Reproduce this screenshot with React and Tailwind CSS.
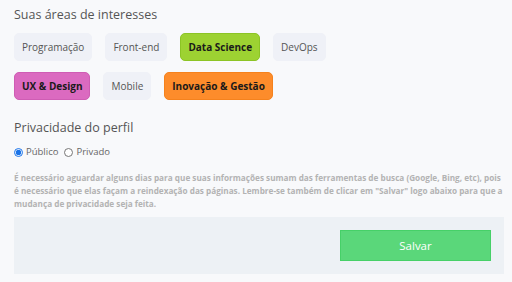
export default function App() {
  const row1 = [
    { label: "Programação", cls: "bg-[#eff1f7] text-[#555] border-[#eff1f7]" },
    { label: "Front-end", cls: "bg-[#eff1f7] text-[#555] border-[#eff1f7]" },
    { label: "Data Science", cls: "bg-[#9dd232] text-[#1a1a1a] font-bold border-[#8cc425]" },
    { label: "DevOps", cls: "bg-[#eff1f7] text-[#555] border-[#eff1f7]" },
  ];
  const row2 = [
    { label: "UX & Design", cls: "bg-[#db6ac0] text-[#1a1a1a] font-bold border-[#cf5db4]" },
    { label: "Mobile", cls: "bg-[#eff1f7] text-[#555] border-[#eff1f7]" },
    { label: "Inovação & Gestão", cls: "bg-[#fd8c2b] text-[#1a1a1a] font-bold border-[#f5821d]" },
  ];

  return (
    <div
      className="w-[512px] h-[282px] bg-[#f8f9fb] pl-[14px] pr-[8px] pt-[5px] overflow-hidden"
      style={{ fontFamily: '"Open Sans", "Noto Sans", sans-serif' }}
    >
      {/* Interesses */}
      <h2 className="text-[12.5px] text-[#555] leading-[20px]">Suas áreas de interesses</h2>
      <div className="mt-[8px] flex flex-col gap-[11px]">
        <div className="flex gap-[13px]">
          {row1.map((c) => (
            <span
              key={c.label}
              className={`h-[28px] px-[7px] flex items-center rounded-[5px] border text-[10px] ${c.cls}`}
            >
              {c.label}
            </span>
          ))}
        </div>
        <div className="flex gap-[13px]">
          {row2.map((c) => (
            <span
              key={c.label}
              className={`h-[28px] px-[7px] flex items-center rounded-[5px] border text-[10px] ${c.cls}`}
            >
              {c.label}
            </span>
          ))}
        </div>
      </div>

      {/* Privacidade */}
      <h2 className="mt-[18px] text-[12.5px] text-[#555] leading-[20px]">Privacidade do perfil</h2>
      <div className="mt-[7px] flex items-center gap-[6px] text-[9.5px] text-[#666]">
        <label className="flex items-center gap-[3px]">
          <input type="radio" name="priv" defaultChecked className="w-[9px] h-[9px] m-0 accent-[#1a73e8]" />
          Público
        </label>
        <label className="flex items-center gap-[3px]">
          <input type="radio" name="priv" className="w-[9px] h-[9px] m-0" />
          Privado
        </label>
      </div>
      <p className="mt-[12px] text-[8.2px] leading-[13px] font-bold text-[#b3b3b3]">
        É necessário aguardar alguns dias para que suas informações sumam das ferramentas de busca (Google, Bing, etc), pois é necessário que elas façam a reindexação das páginas. Lembre-se também de clicar em "Salvar" logo abaixo para que a mudança de privacidade seja feita.
      </p>

      {/* Footer */}
      <div className="mt-[7px] h-[57px] bg-[#edf1f5] flex items-center justify-end pr-[13px]">
        <button className="w-[151px] h-[31px] bg-[#5ad77a] border border-[#46d068] text-white text-[11.5px]">
          Salvar
        </button>
      </div>
    </div>
  );
}
